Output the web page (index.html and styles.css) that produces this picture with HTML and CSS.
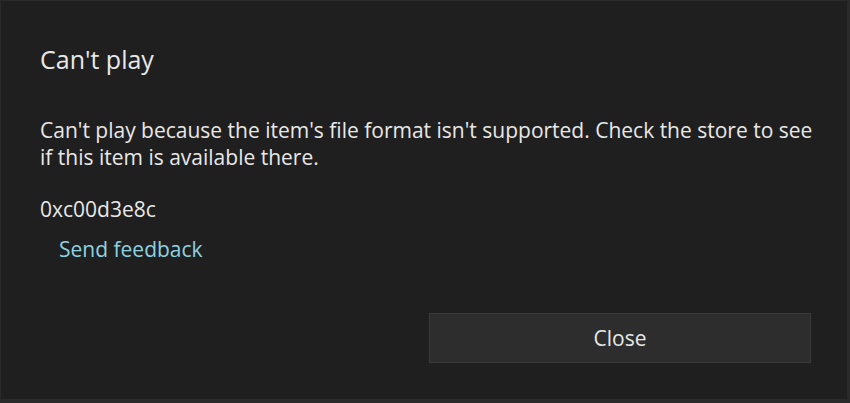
FILE: index.html
```html
<!DOCTYPE html>
<html>
<head>
<meta charset="utf-8">
<link rel="stylesheet" href="styles.css">
</head>
<body>
<div class="dialog">
  <div class="content">
    <h1 class="title">Can't play</h1>
    <p class="message">Can't play because the item's file format isn't supported. Check the store to see if this item is available there.</p>
    <p class="code">0xc00d3e8c</p>
    <a class="link">Send feedback</a>
  </div>
  <div class="actions">
    <button class="btn">Close</button>
  </div>
</div>
</body>
</html>
```
FILE: styles.css
```css
html, body {
  margin: 0;
  padding: 0;
  background: #2a2a2a;
}
.dialog {
  width: 846px;
  height: 398px;
  margin: 1px 3px 4px 1px;
  background: #1f1f1f;
  box-sizing: border-box;
  font-family: "Open Sans", "Noto Sans", sans-serif;
  color: #e8e8e8;
  display: flex;
  flex-direction: column;
  padding: 0 36px 0 39px;
}
.content {
  flex: 1;
}
.title {
  margin: 42px 0 0 0;
  font-size: 25px;
  font-weight: 400;
  line-height: 32px;
}
.message {
  margin: 42px 0 0 0;
  font-size: 21px;
  line-height: 27px;
  width: 780px;
}
.code {
  margin: 25px 0 0 0;
  font-size: 21px;
  line-height: 27px;
}
.link {
  display: inline-block;
  margin: 13px 0 0 19px;
  font-size: 21px;
  line-height: 27px;
  color: #8ed2e0;
}
.actions {
  display: flex;
  justify-content: flex-end;
  padding-bottom: 36px;
}
.btn {
  width: 382px;
  height: 50px;
  background: #2d2d2d;
  border: 1px solid #3a3a3a;
  color: #e8e8e8;
  font-family: "Open Sans", "Noto Sans", sans-serif;
  font-size: 21px;
  padding: 0;
}
```
